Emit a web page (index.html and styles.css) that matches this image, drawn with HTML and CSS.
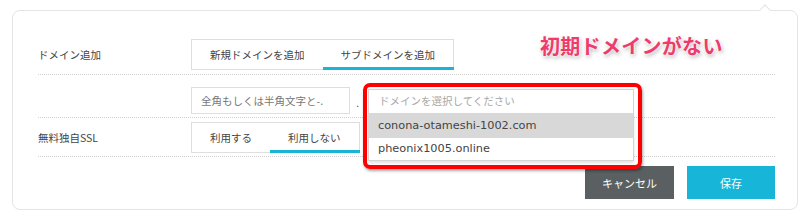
FILE: index.html
```html
<!DOCTYPE html>
<html lang="ja">
<head>
<meta charset="utf-8">
<link rel="stylesheet" href="styles.css">
</head>
<body>
<div class="card">
  <span class="notch"></span>
  <div class="row r1">
    <div class="label">ドメイン追加</div>
    <div class="tabs">
      <div class="tab">新規ドメインを追加</div>
      <div class="tab active">サブドメインを追加</div>
    </div>
  </div>
  <div class="row r2">
    <div class="label"></div>
    <div class="field">
      <div class="input">全角もしくは半角文字と-.</div>
      <span class="dot">.</span>
      <div class="select">
        <div class="placeholder">ドメインを選択してください</div>
        <div class="list">
          <div class="opt hl">conona-otameshi-1002.com</div>
          <div class="opt">pheonix1005.online</div>
        </div>
        <div class="redbox"></div>
      </div>
    </div>
  </div>
  <div class="row r3">
    <div class="label">無料独自SSL</div>
    <div class="tabs">
      <div class="tab">利用する</div>
      <div class="tab active">利用しない</div>
    </div>
  </div>
  <div class="actions">
    <button class="btn cancel">キャンセル</button>
    <button class="btn save">保存</button>
  </div>
  <div class="note">初期ドメインがない</div>
</div>
</body>
</html>
```
FILE: styles.css
```css
* { box-sizing: border-box; }
html, body { margin: 0; padding: 0; background: #fff; }
body {
  font-family: "DejaVu Sans", "Noto Sans CJK JP", sans-serif;
  font-size: 10.5px;
  color: #444;
  width: 800px;
  height: 222px;
  overflow: hidden;
}
.card {
  position: relative;
  margin: 10px 0 0 12px;
  width: 786px;
  height: 200px;
  border: 1px solid #e4e4e4;
  border-radius: 8px;
  padding: 24px 22px 0 25px;
}
.notch {
  position: absolute;
  top: -5px;
  left: 748px;
  width: 8px;
  height: 8px;
  background: #fff;
  border-top: 1px solid #e4e4e4;
  border-left: 1px solid #e4e4e4;
  transform: rotate(45deg);
}
.row {
  display: flex;
  align-items: center;
  border-bottom: 1px dotted #cfcfcf;
  padding: 4px 0 3px;
}
.r1 { padding-bottom: 4px; }
.r2 { padding-top: 12px; }
.label {
  width: 153px;
  flex: none;
  font-family: "Noto Sans CJK JP", sans-serif;
}
.tabs {
  display: flex;
  height: 31px;
  border: 1px solid #dedede;
  font-family: "Noto Sans CJK JP", sans-serif;
}
.tab {
  position: relative;
  display: flex;
  align-items: center;
  padding: 0 18px;
  color: #444;
}
.tab.active::after {
  content: "";
  position: absolute;
  left: 0;
  right: -1px;
  bottom: -1px;
  height: 3px;
  background: #1ab4d6;
}
.field { display: flex; align-items: center; }
.input {
  width: 159px;
  height: 27px;
  border: 1px solid #dedede;
  padding-left: 9px;
  display: flex;
  align-items: center;
  color: #777;
  font-family: "Noto Sans CJK JP", sans-serif;
}
.dot { margin: 0 0 0 6px; width: 12px; color: #555; padding-top: 4px; }
.select {
  position: relative;
  width: 266px;
  height: 24px;
  border: 1px solid #d4d4d4;
  border-bottom: none;
  background: #fff;
  z-index: 2;
}
.placeholder {
  padding-left: 10px;
  line-height: 22px;
  color: #a8a8a8;
  font-family: "Noto Sans CJK JP", sans-serif;
}
.list {
  position: absolute;
  top: 23px;
  left: -1px;
  width: 266px;
  background: #fff;
  border: 1px solid #d4d4d4;
  border-top: none;
  box-shadow: 0 2px 3px rgba(0,0,0,0.12);
}
.opt {
  height: 24px;
  line-height: 24px;
  padding-left: 9px;
  font-size: 11.3px;
  color: #444;
}
.opt.hl { background: #d8d8d8; height: 25px; line-height: 25px; }
.opt + .opt { height: 22px; line-height: 22px; }
.redbox {
  position: absolute;
  left: -6px;
  top: -7px;
  width: 279px;
  height: 86px;
  border: 4px solid #ff0000;
  border-radius: 7px;
  box-shadow: 1px 2px 3px rgba(0,0,0,0.35);
  pointer-events: none;
}
.actions {
  display: flex;
  justify-content: flex-end;
  gap: 13px;
  margin-top: 9px;
}
.btn {
  border: none;
  height: 33px;
  width: 88px;
  color: #fff;
  font-family: "Noto Sans CJK JP", sans-serif;
  font-size: 11px;
  padding: 0;
}
.cancel { background: #5a6062; width: 89px; }
.save { background: #17b6d8; }
.note {
  position: absolute;
  left: 527px;
  top: 22px;
  font-family: "Noto Sans CJK JP", sans-serif;
  font-weight: bold;
  font-size: 20px;
  line-height: 26px;
  color: #ee3b6c;
  letter-spacing: 0.3px;
  text-shadow: 0 0 2px #fff, 0 0 3px #fff, 1px 2px 4px rgba(0,0,0,0.35);
}
```
